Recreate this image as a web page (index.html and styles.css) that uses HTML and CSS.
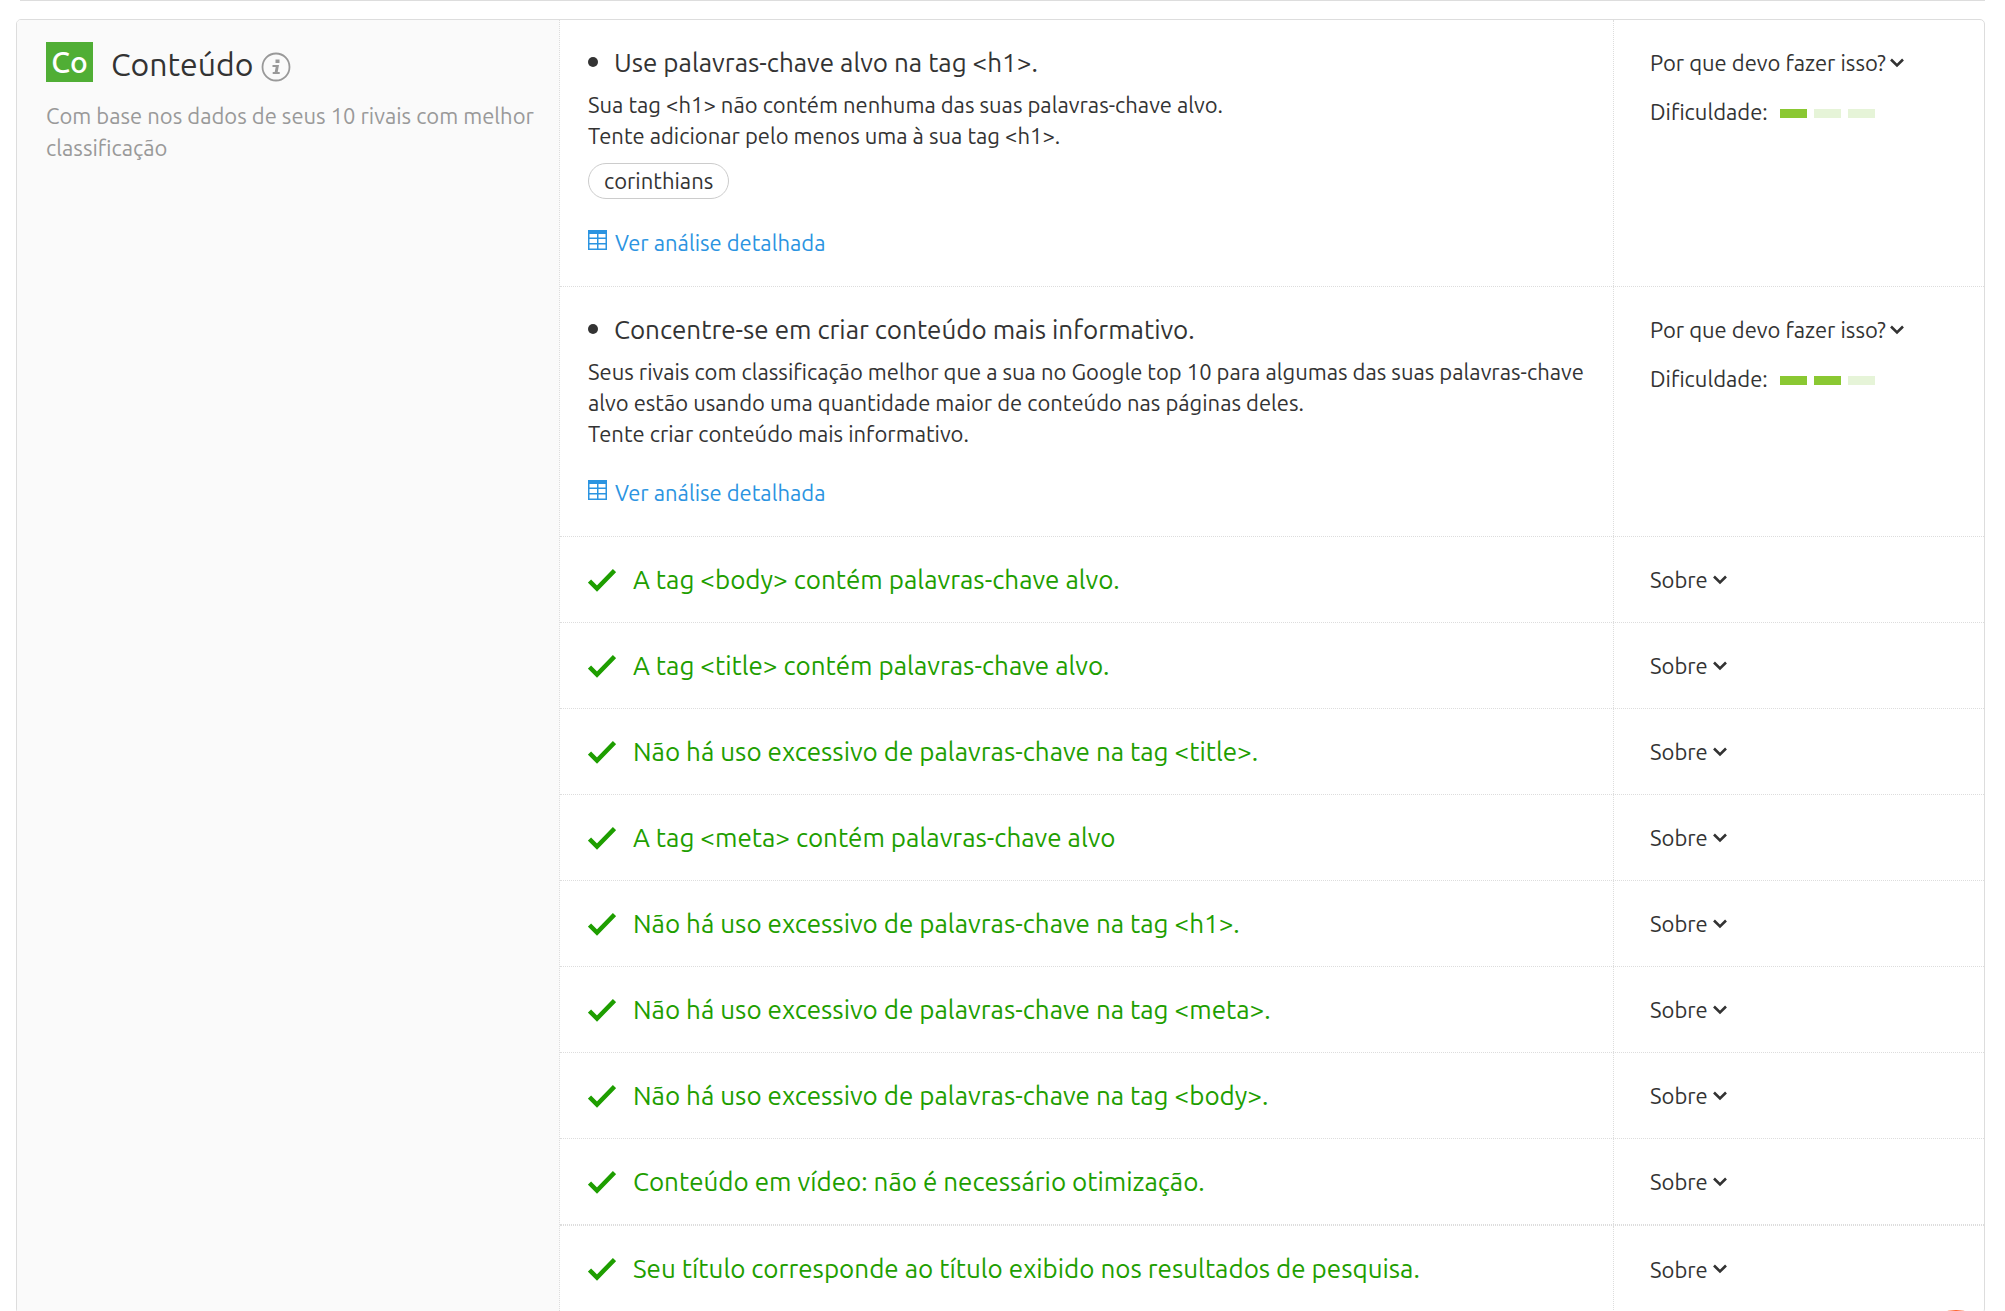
FILE: index.html
```
<!DOCTYPE html>
<html lang="pt-BR">
<head>
    <meta charset="UTF-8">
    <meta name="viewport" content="width=device-width, initial-scale=1.0">
    <title>Conteúdo</title>
    <link rel="stylesheet" href="styles.css">
</head>
<body>
    <svg class="sprite" aria-hidden="true">
        <symbol id="check" viewBox="0 0 28 24">
            <path d="M1.500 13 L9 20.500 L26.500 2.500" fill="none" stroke="currentColor" stroke-width="4.500"/>
        </symbol>
        <symbol id="arrow" viewBox="0 0 14 10">
            <path d="M1 1.500 L7 7.500 L13 1.500" fill="none" stroke="currentColor" stroke-width="2.600"/>
        </symbol>
        <symbol id="table" viewBox="0 0 19 20">
            <path d="M0 0H19V20H0Z M1.500 4V7.500H9V4Z M10.500 4V7.500H17.500V4Z M1.500 9V13H9V9Z M10.500 9V13H17.500V9Z M1.500 14.500V18.500H9V14.500Z M10.500 14.500V18.500H17.500V14.500Z" fill="currentColor" fill-rule="evenodd"/>
        </symbol>
    </svg>
    <hr class="previous-end">
    <section class="card">
        <aside class="category">
            <header class="category-header">
                <span class="badge">Co</span>
                <h2>Conteúdo</h2>
                <button class="info" aria-label="Informações">
                    <svg viewBox="0 0 30 30" width="30" height="30">
                        <circle cx="15" cy="15" r="13.500" fill="none" stroke="currentColor" stroke-width="1.800"/>
                        <path d="M14.500 7.500h4v3.500h-4z M11.500 13h6.500l-1.300 7h2v2h-7v-2h2l1-5h-3.200z" fill="currentColor"/>
                    </svg>
                </button>
            </header>
            <p>Com base nos dados de seus 10 rivais com melhor classificação</p>
        </aside>
        <div class="ideas">
            <article class="row">
                <div class="idea">
                    <h3>Use palavras-chave alvo na tag &lt;h1&gt;.</h3>
                    <p>Sua tag &lt;h1&gt; não contém nenhuma das suas palavras-chave alvo.<br>Tente adicionar pelo menos uma à sua tag &lt;h1&gt;.</p>
                    <span class="keyword">corinthians</span>
                    <a class="details" href="#"><svg><use href="#table"/></svg>Ver análise detalhada</a>
                </div>
                <div class="side">
                    <button class="toggle">Por que devo fazer isso?<svg><use href="#arrow"/></svg></button>
                    <div class="difficulty">Dificuldade: <span class="bars"><i class="on"></i><i></i><i></i></span></div>
                </div>
            </article>
            <article class="row">
                <div class="idea">
                    <h3>Concentre-se em criar conteúdo mais informativo.</h3>
                    <p>Seus rivais com classificação melhor que a sua no Google top 10 para algumas das suas palavras-chave alvo estão usando uma quantidade maior de conteúdo nas páginas deles.<br>Tente criar conteúdo mais informativo.</p>
                    <a class="details" href="#"><svg><use href="#table"/></svg>Ver análise detalhada</a>
                </div>
                <div class="side">
                    <button class="toggle">Por que devo fazer isso?<svg><use href="#arrow"/></svg></button>
                    <div class="difficulty">Dificuldade: <span class="bars"><i class="on"></i><i class="on"></i><i></i></span></div>
                </div>
            </article>
            <article class="row done">
                <h3><svg><use href="#check"/></svg>A tag &lt;body&gt; contém palavras-chave alvo.</h3>
                <div class="side"><button class="toggle">Sobre <svg><use href="#arrow"/></svg></button></div>
            </article>
            <article class="row done">
                <h3><svg><use href="#check"/></svg>A tag &lt;title&gt; contém palavras-chave alvo.</h3>
                <div class="side"><button class="toggle">Sobre <svg><use href="#arrow"/></svg></button></div>
            </article>
            <article class="row done">
                <h3><svg><use href="#check"/></svg>Não há uso excessivo de palavras-chave na tag &lt;title&gt;.</h3>
                <div class="side"><button class="toggle">Sobre <svg><use href="#arrow"/></svg></button></div>
            </article>
            <article class="row done">
                <h3><svg><use href="#check"/></svg>A tag &lt;meta&gt; contém palavras-chave alvo</h3>
                <div class="side"><button class="toggle">Sobre <svg><use href="#arrow"/></svg></button></div>
            </article>
            <article class="row done">
                <h3><svg><use href="#check"/></svg>Não há uso excessivo de palavras-chave na tag &lt;h1&gt;.</h3>
                <div class="side"><button class="toggle">Sobre <svg><use href="#arrow"/></svg></button></div>
            </article>
            <article class="row done">
                <h3><svg><use href="#check"/></svg>Não há uso excessivo de palavras-chave na tag &lt;meta&gt;.</h3>
                <div class="side"><button class="toggle">Sobre <svg><use href="#arrow"/></svg></button></div>
            </article>
            <article class="row done">
                <h3><svg><use href="#check"/></svg>Não há uso excessivo de palavras-chave na tag &lt;body&gt;.</h3>
                <div class="side"><button class="toggle">Sobre <svg><use href="#arrow"/></svg></button></div>
            </article>
            <article class="row done">
                <h3><svg><use href="#check"/></svg>Conteúdo em vídeo: não é necessário otimização.</h3>
                <div class="side"><button class="toggle">Sobre <svg><use href="#arrow"/></svg></button></div>
            </article>
            <article class="row done">
                <h3><svg><use href="#check"/></svg>Seu título corresponde ao título exibido nos resultados de pesquisa.</h3>
                <div class="side"><button class="toggle">Sobre <svg><use href="#arrow"/></svg></button></div>
            </article>
        </div>
    </section>
    <button class="chat" aria-label="Chat"></button>
</body>
</html>
```
FILE: styles.css
```
* {
    box-sizing: border-box;
}
body {
    margin: 0;
    height: 100vh;
    overflow: hidden;
    background-color: #fff;
    color: #333;
    font-family: Ubuntu, "Noto Sans", sans-serif;
    font-size: 22px;
    line-height: 31px;
}
h2, h3, p {
    margin: 0;
    font-weight: normal;
}
button {
    padding: 0;
    border: none;
    background: none;
    color: inherit;
    font: inherit;
    cursor: pointer;
}
.sprite {
    display: none;
}
.previous-end {
    margin: 0 20px 18px;
    border: none;
    border-top: 1px solid #ddd;
}
.card {
    display: flex;
    margin: 0 20px 0 16px;
    border: 1px solid #ddd;
    border-radius: 5px;
    overflow: hidden;
}
.category {
    flex: 0 0 543px;
    padding: 22px 24px 24px 29px;
    border-right: 1px dotted #ddd;
    background-color: #fafafa;
    color: #999;
}
.category-header {
    display: flex;
    align-items: flex-start;
    margin-bottom: 12px;
}
.category p {
    line-height: 32px;
}
.badge {
    width: 47px;
    margin-right: 18px;
    background-color: #50ae35;
    color: #fff;
    font-size: 30px;
    font-weight: 500;
    line-height: 40px;
    text-align: center;
}
.category h2 {
    margin-right: 8px;
    color: #333;
    font-size: 32px;
    line-height: 44px;
}
.info {
    display: flex;
    margin: 10px 0 6px;
    color: #999;
}
.ideas {
    flex: 1;
}
.row {
    display: flex;
    border-bottom: 1px dotted #ddd;
}
.idea {
    flex: 1;
    padding: 25px 24px 28px 28px;
}
.row h3 {
    font-size: 26px;
    line-height: 36px;
}
.idea h3 {
    display: flex;
    align-items: center;
    margin-bottom: 8px;
}
.idea h3::before {
    content: "";
    width: 10px;
    height: 10px;
    margin: 0 16px 3px 0;
    border-radius: 50%;
    background-color: #333;
}
.keyword {
    display: table;
    margin-top: 12px;
    padding: 0 15px;
    border: 1px solid #ccc;
    border-radius: 18px;
    line-height: 34px;
}
.details {
    display: flex;
    align-items: center;
    margin-top: 28px;
    color: #2b94e1;
    text-decoration: none;
}
.details svg {
    width: 19px;
    height: 20px;
    margin: 0 8px 6px 0;
}
.side {
    flex: 0 0 371px;
    padding: 27px 24px 26px 36px;
    border-left: 1px dotted #ddd;
}
.toggle {
    display: flex;
    align-items: center;
    gap: 4px;
}
.toggle svg {
    width: 14px;
    height: 10px;
}
.difficulty {
    display: flex;
    align-items: center;
    gap: 12px;
    margin-top: 18px;
}
.bars {
    display: flex;
    gap: 7px;
    padding-top: 4px;
}
.bars i {
    width: 27px;
    height: 9px;
    background-color: #e6f4d8;
}
.bars .on {
    background-color: #8ac832;
}
.done {
    min-height: 86px;
}
.done h3 {
    display: flex;
    flex: 1;
    align-items: center;
    padding-left: 28px;
    color: #1e9e00;
}
.done h3 svg {
    width: 28px;
    height: 24px;
    margin-right: 17px;
}
.done .side {
    display: flex;
    align-items: center;
    padding-top: 0;
    padding-bottom: 0;
}
.done .toggle {
    gap: 5px;
}
.row:last-child {
    min-height: 88px;
    border-top: 1px dotted #ddd;
}
.chat {
    position: fixed;
    right: 9px;
    bottom: -79px;
    width: 80px;
    height: 80px;
    border-radius: 50%;
    background-color: #ff622d;
}
```
